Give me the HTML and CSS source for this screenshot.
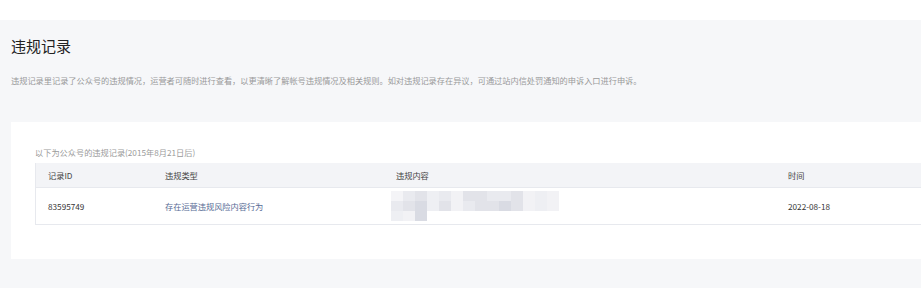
FILE: index.html
```html
<!DOCTYPE html>
<html lang="zh-CN">
<head>
  <meta charset="UTF-8">
  <title>违规记录</title>
  <link rel="stylesheet" href="styles.css">
</head>
<body>

  <div class="topbar"></div>

  <div class="main">
    <h2 class="title">违规记录</h2>
    <p class="desc">违规记录里记录了公众号的违规情况，运营者可随时进行查看，以更清晰了解帐号违规情况及相关规则。如对违规记录存在异议，可通过站内信处罚通知的申诉入口进行申诉。</p>

    <!-- 记录列表 -->
    <div class="card">
      <p class="card-tip">以下为公众号的违规记录(2015年8月21日后)</p>
      <div class="table">
        <div class="row head">
          <div class="cell">记录ID</div>
          <div class="cell">违规类型</div>
          <div class="cell">违规内容</div>
          <div class="cell">时间</div>
        </div>
        <div class="row">
          <div class="cell">83595749</div>
          <div class="cell type">存在运营违规风险内容行为</div>
          <div class="cell">
            <div class="mosaic">
              <i class="m1"></i><i class="m2"></i><i class="m3"></i><i class="m4"></i><i class="m2"></i><i class="m5"></i><i class="m3"></i><i class="m3"></i><i class="m2"></i><i class="m2"></i><i class="m3"></i><i class="m5"></i><i class="m4"></i><i class="m5"></i>
              <i class="m2"></i><i class="m3"></i><i class="m6"></i><i class="m4"></i><i class="m3"></i><i class="m5"></i><i class="m2"></i><i class="m3"></i><i class="m3"></i><i class="m6"></i><i class="m3"></i><i class="m5"></i><i class="m4"></i><i class="m5"></i>
              <i class="m4"></i><i class="m5"></i><i class="m6"></i><i class="m0"></i><i class="m0"></i><i class="m0"></i><i class="m0"></i><i class="m0"></i><i class="m0"></i><i class="m0"></i><i class="m0"></i><i class="m0"></i><i class="m0"></i><i class="m0"></i>
            </div>
          </div>
          <div class="cell">2022-08-18</div>
        </div>
      </div>
    </div>
  </div>

</body>
</html>
```

FILE: styles.css
```css
body {
  margin: 0;
  background: #fff;
  font-family: "Noto Sans CJK SC", "Liberation Sans", sans-serif;
  overflow: hidden;
}

.topbar {
  height: 20px;
  background: #fff;
}

.main {
  background: #f6f7f9;
  padding: 16px 0 29px 11px;
}

.title {
  margin: 0;
  font-size: 15px;
  font-weight: normal;
  line-height: 20px;
  color: #222;
}

.desc {
  margin: 18px 0 0;
  font-size: 8.2px;
  line-height: 12px;
  color: #999;
  white-space: nowrap;
}

/* --- карточка с таблицей --- */
.card {
  background: #fff;
  margin: 36px -40px 0 0;
  padding: 24px 0 34px 24px;
}

.card-tip {
  margin: 0 0 5px;
  font-size: 8.2px;
  line-height: 12px;
  color: #9a9a9a;
}

.table {
  border-left: 1px solid #e7e9ee;
}

.row {
  display: grid;
  grid-template-columns: 117px 231px 392px 1fr;
  height: 36px;
  align-items: center;
  border-bottom: 1px solid #e7e9ee;
  font-size: 8.2px;
  color: #353535;
}

.row.head {
  height: 24px;
  background: #f3f4f7;
  color: #444;
}

.cell {
  padding-left: 12px;
}

.type {
  color: #576b95;
}

.mosaic {
  display: grid;
  grid-template-columns: repeat(14, 12px);
  grid-auto-rows: 10px;
  margin-left: -5px;
  filter: blur(0.4px);
}

.mosaic i { display: block; }
.m0 { background: #fff; }
.m1 { background: #f4f4f7; }
.m2 { background: #e9eaef; }
.m3 { background: #e2e3e9; }
.m4 { background: #eeeff3; }
.m5 { background: #f2f2f5; }
.m6 { background: #d9dbe3; }
```
